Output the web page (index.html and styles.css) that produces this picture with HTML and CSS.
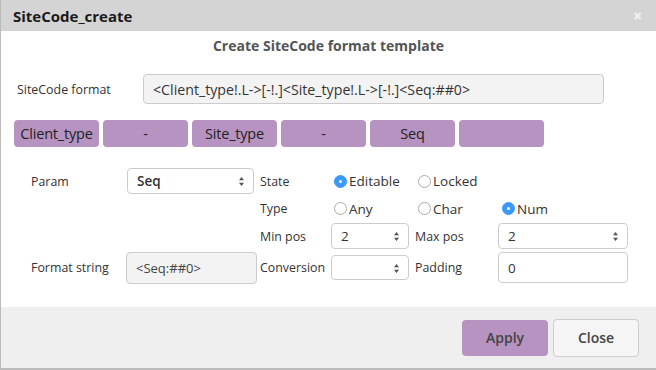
FILE: index.html
```html
<!DOCTYPE html>
<html lang="en">
<head>
  <meta charset="UTF-8" />
  <title>SiteCode_create</title>
  <link rel="stylesheet" href="styles.css">
</head>
<body>
  <div class="modal">
    <div class="modal-head">
      <h2>SiteCode_create</h2>
      <span class="close-x">&#10006;</span>
    </div>

    <div class="modal-body">
      <h3>Create SiteCode format template</h3>

      <div class="format-row">
        <label>SiteCode format</label>
        <div class="field readonly wide">&lt;Client_type!.L-&gt;[-!.]&lt;Site_type!.L-&gt;[-!.]&lt;Seq:##0&gt;</div>
      </div>

      <div class="tags">
        <span class="tag">Client_type</span>
        <span class="tag">-</span>
        <span class="tag">Site_type</span>
        <span class="tag">-</span>
        <span class="tag">Seq</span>
        <span class="tag"></span>
      </div>

      <div class="params">
        <label class="lbl">Param</label>
        <div class="sel param-sel">Seq
          <svg class="arr" width="7" height="11" viewBox="0 0 7 11"><path d="M3.5 1 L6 4.2 L1 4.2 Z M3.5 10 L6 6.8 L1 6.8 Z" fill="#555"/></svg>
        </div>
        <label class="lbl sm">State</label>
        <div class="radio c4"><span class="dot on"></span>Editable</div>
        <div class="radio c5"><span class="dot"></span>Locked</div>
        <div></div>

        <div></div>
        <div></div>
        <label class="lbl sm">Type</label>
        <div class="radio c4"><span class="dot"></span>Any</div>
        <div class="radio c5"><span class="dot"></span>Char</div>
        <div class="radio c6"><span class="dot on"></span>Num</div>

        <div></div>
        <div></div>
        <label class="lbl sm">Min pos</label>
        <div class="sel">2
          <svg class="arr" width="7" height="11" viewBox="0 0 7 11"><path d="M3.5 1 L6 4.2 L1 4.2 Z M3.5 10 L6 6.8 L1 6.8 Z" fill="#555"/></svg>
        </div>
        <label class="lbl sm">Max pos</label>
        <div class="sel">2
          <svg class="arr" width="7" height="11" viewBox="0 0 7 11"><path d="M3.5 1 L6 4.2 L1 4.2 Z M3.5 10 L6 6.8 L1 6.8 Z" fill="#555"/></svg>
        </div>

        <label class="lbl">Format string</label>
        <div class="field readonly fmt">&lt;Seq:##0&gt;</div>
        <label class="lbl sm">Conversion</label>
        <div class="sel conv">
          <svg class="arr" width="7" height="11" viewBox="0 0 7 11"><path d="M3.5 1 L6 4.2 L1 4.2 Z M3.5 10 L6 6.8 L1 6.8 Z" fill="#555"/></svg>
        </div>
        <label class="lbl sm">Padding</label>
        <div class="field pad">0</div>
      </div>
    </div>

    <div class="modal-foot">
      <button class="btn apply">Apply</button>
      <button class="btn close">Close</button>
    </div>
  </div>
</body>
</html>
```

FILE: styles.css
```css
* {
  box-sizing: border-box;
  font-family: 'Open Sans', sans-serif;
}

body {
  margin: 0;
  background: #fff;
  color: #333;
}

.modal {
  width: 656px;
  height: 370px;
  border-left: 1px solid #bbb;
  border-bottom: 2px solid #bbb;
  display: flex;
  flex-direction: column;
}

.modal-head {
  background-color: #d4d4d4;
  height: 31px;
  padding: 0 12px;
  display: flex;
  justify-content: space-between;
  align-items: center;
}

.modal-head h2 {
  margin: 0;
  font-size: 15px;
  font-weight: 700;
  color: #1a1a1a;
}

.close-x {
  color: #f0ecf4;
  font-size: 11px;
  margin-right: 2px;
}

.modal-body {
  flex: 1;
  padding: 5px 0 0 0;
}

.modal-body h3 {
  margin: 0;
  text-align: center;
  font-size: 14px;
  font-weight: 700;
  color: #555;
}

.format-row {
  display: flex;
  align-items: center;
  margin-top: 19px;
  padding-left: 16px;
}

.format-row label {
  width: 126px;
  font-size: 12.4px;
}

.field {
  border: 1px solid #ccc;
  border-radius: 4px;
  font-size: 13px;
  padding: 0 9px;
  display: flex;
  align-items: center;
  background: #fff;
}

.field.readonly {
  background-color: #f3f3f3;
}

.field.wide {
  width: 461px;
  height: 30px;
  font-size: 14.2px;
}

.tags {
  display: flex;
  gap: 4px;
  margin-top: 16px;
  padding-left: 13px;
}

.tag {
  width: 85px;
  height: 27px;
  background-color: #b693c1;
  border-radius: 4px;
  font-size: 14.5px;
  letter-spacing: -0.2px;
  display: flex;
  align-items: center;
  justify-content: center;
  color: #222;
}

.params {
  display: grid;
  grid-template-columns: 96px 127px 77px 78px 89px 130px;
  grid-template-rows: 26px 25px 26px 33px;
  row-gap: 2px;
  margin-top: 21px;
  padding-left: 30px;
  align-items: center;
  font-size: 12px;
}

.lbl {
  font-size: 12.4px;
}

.lbl.sm {
  padding-left: 6px;
}

.sel {
  position: relative;
  height: 26px;
  border: 1px solid #ccc;
  border-radius: 4px;
  padding: 0 9px;
  display: flex;
  align-items: center;
  font-size: 13.5px;
  background: #fff;
}

.param-sel {
  font-weight: 600;
  color: #333;
}

.sel .arr {
  position: absolute;
  right: 8px;
  top: 7px;
}

.sel.conv {
  height: 25px;
}

.field.fmt {
  height: 32px;
  margin-right: -3px;
  margin-left: -1px;
  color: #444;
}

.field.pad {
  height: 31px;
  font-size: 13.5px;
}

.radio {
  display: flex;
  align-items: center;
  gap: 2px;
  font-size: 13.5px;
}

.radio.c4 {
  margin-left: 3px;
}

.radio.c5 {
  margin-left: 9px;
}

.radio.c6 {
  margin-left: 4px;
}

.dot {
  width: 13px;
  height: 13px;
  border-radius: 50%;
  border: 1px solid #aaa;
  background: #fff;
  display: inline-block;
  position: relative;
}

.dot.on {
  background-color: #3b99fc;
  border-color: #3b99fc;
}

.dot.on::after {
  content: "";
  position: absolute;
  left: 4px;
  top: 4px;
  width: 3px;
  height: 3px;
  border-radius: 50%;
  background: #fff;
}

.modal-foot {
  height: 61px;
  background-color: #efefef;
  display: flex;
  justify-content: flex-end;
  align-items: center;
  gap: 5px;
  padding-right: 17px;
}

.btn {
  width: 86px;
  height: 36px;
  border-radius: 4px;
  font-size: 14px;
  font-weight: 600;
  color: #444;
  cursor: pointer;
}

.btn.apply {
  background-color: #b693c1;
  border: none;
}

.btn.close {
  background-color: #f5f5f5;
  border: 1px solid #ccc;
  height: 38px;
}
```
